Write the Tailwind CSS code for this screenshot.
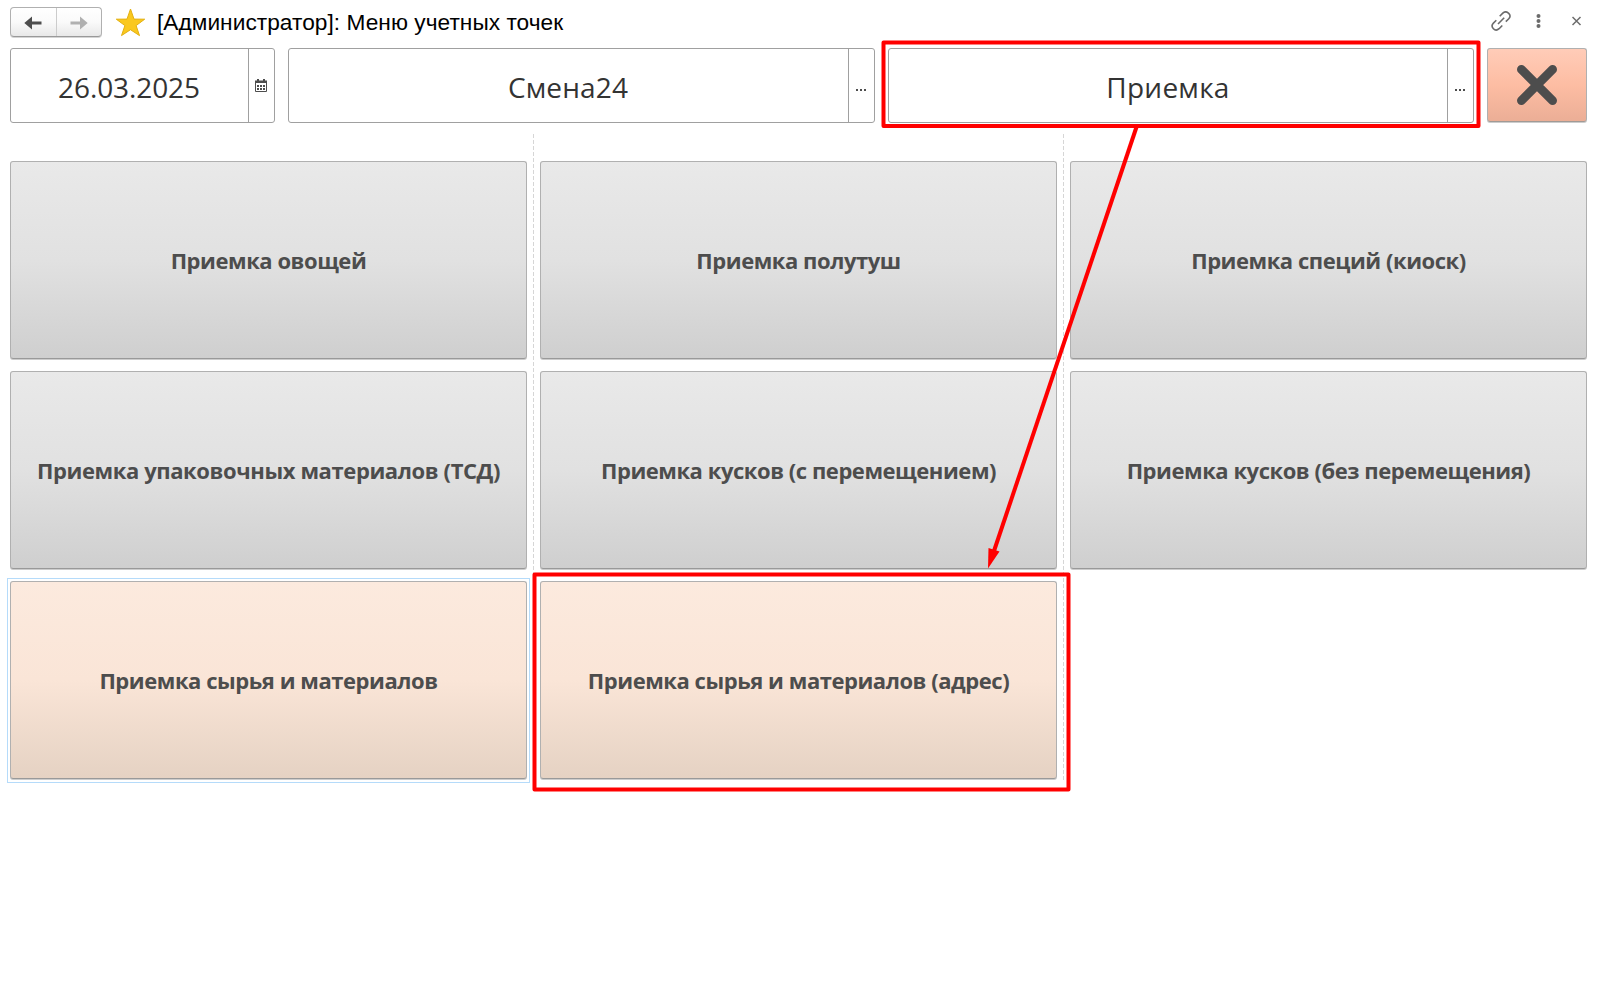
<!DOCTYPE html>
<html lang="ru">
<head>
<meta charset="utf-8">
<title>Меню учетных точек</title>
<script src="https://cdn.jsdelivr.net/npm/@tailwindcss/browser@4"></script>
</head>
<body class="relative h-[988px] w-[1606px] overflow-hidden bg-white font-['Open_Sans','Noto_Sans',sans-serif]">
<header class="flex h-12 items-start pl-[10px] pr-[19px]">
  <div class="mt-[7px] flex h-[30px] w-[92px] rounded-[4px] border border-[#b0b0b0] border-b-[#999] bg-linear-to-b from-white via-[#fafafa] to-[#e8e8e8] shadow-[0_1px_0_#d4d4d4]">
    <div class="flex flex-1 items-center justify-center border-r border-[#ccc]"><svg class="mt-px h-[14px] w-[18px]" viewBox="0 0 18 14"><path d="M0.3 7 8 0.4V5.4H17.5V8.6H8V13.6Z" fill="#4d4d4d"/></svg></div>
    <div class="flex flex-1 items-center justify-center"><svg class="mt-px h-[14px] w-[18px]" viewBox="0 0 18 14"><path d="M17.700 7 10 0.4V5.4H0.5V8.6H10V13.6Z" fill="#b0b0b0"/></svg></div>
  </div>
  <svg class="ml-[13px] mt-2 h-[29px] w-[31px]" viewBox="0 0 31 29"><path d="M15.5 1 19 11.1 29.7 11.2 21.1 17.6 24.5 27.6 15.5 21.7 6.5 27.6 9.9 17.6 1.3 11.2 12 11.1Z" fill="#fac81e" stroke="#e3b010" stroke-width="1"/></svg>
  <h1 class="ml-[11px] mt-[7px] whitespace-nowrap font-['Liberation_Sans',sans-serif] text-[22.67px] leading-[30px] tracking-[0.05px] text-black">[Администратор]: Меню учетных точек</h1>
  <div class="ml-auto flex items-center pt-[11px]">
    <svg class="h-5 w-5" viewBox="0 0 20 20" fill="none" stroke="#6b6b6b" stroke-width="1.6" stroke-linecap="butt"><path d="M8.700 5.200 11.800 2.100C13.600.4 16 .7 17.700 2.300S19.600 6 17.800 7.800L14.800 10.700M5.300 9.200 2.400 12.100C.7 13.800.8 16 2.400 17.700S6.400 19.300 8.100 17.700L11.300 14.500M7 13 13.200 6.800"/></svg>
    <svg class="ml-[25px] h-[14px] w-[5px]" viewBox="0 0 5 14" fill="#6b6b6b"><circle cx="2.5" cy="2" r="2"/><circle cx="2.5" cy="7" r="2"/><circle cx="2.5" cy="12" r="2"/></svg>
    <svg class="ml-[31px] mr-[5px] h-[10px] w-[10px]" viewBox="0 0 10 10" stroke="#6b6b6b" stroke-width="1.5"><path d="M.5 1 8.500 9M8.500 1 .5 9"/></svg>
  </div>
</header>
<section class="flex h-[75px] pl-[10px] text-[28px] text-[#333]">
  <div class="flex w-[265px] rounded-[3px] border border-[#a0a0a0]">
    <div class="flex flex-1 items-center justify-center pr-px pt-[2px] tracking-[-0.1px]">26.03.2025</div>
    <div class="flex w-[26px] items-center justify-center border-l border-[#a0a0a0] pr-px"><svg class="mb-[1px] h-[13px] w-3" viewBox="0 0 12 13"><path d="M.5 2.500H11.500V12.500H.5Z" fill="none" stroke="#4d4d4d"/><path d="M0 1.500H12V4H0ZM2 0H4V3H2ZM8 0H10V3H8Z" fill="#4d4d4d"/><path d="M2 6H4V8H2ZM5 6H7V8H5ZM8 6H10V8H8ZM2 9H4V11H2ZM5 9H7V11H5ZM8 9H10V11H8Z" fill="#4d4d4d"/></svg></div>
  </div>
  <div class="ml-[13px] flex w-[587px] rounded-[3px] border border-[#a0a0a0]">
    <div class="flex flex-1 items-center justify-center pr-px pt-[2px] tracking-[0.15px]">Смена24</div>
    <div class="flex w-[26px] items-center justify-center gap-[2px] border-l border-[#a0a0a0] pr-px pt-[9px]"><i class="size-[2px] bg-[#4d4d4d]"></i><i class="size-[2px] bg-[#4d4d4d]"></i><i class="size-[2px] bg-[#4d4d4d]"></i></div>
  </div>
  <div class="ml-[13px] flex w-[586px] rounded-[3px] border border-[#a0a0a0]">
    <div class="flex flex-1 items-center justify-center pt-[2px] tracking-[0.25px]">Приемка</div>
    <div class="flex w-[26px] items-center justify-center gap-[2px] border-l border-[#a0a0a0] pr-px pt-[9px]"><i class="size-[2px] bg-[#4d4d4d]"></i><i class="size-[2px] bg-[#4d4d4d]"></i><i class="size-[2px] bg-[#4d4d4d]"></i></div>
  </div>
  <button class="ml-[13px] flex h-[74px] w-[100px] items-center justify-center rounded-[3px] border border-[#b0b0b0] border-b-[#a09a96] bg-linear-to-b from-[#ffccb8] via-[#fdbda3] to-[#ebae96] shadow-[0_1px_0_#ccc]"><svg class="h-10 w-10" viewBox="0 0 40 40"><path d="M4.4 4.4 35.6 35.6M35.6 4.4 4.4 35.6" stroke="#4d4d4d" stroke-width="8.8" stroke-linecap="round"/></svg></button>
</section>
<main class="relative mt-[11px] grid h-[645px] grid-cols-[517px_517px_517px] grid-rows-[198px_198px_198px] gap-x-[13px] gap-y-3 pl-[10px] pt-[27px] text-[22px] font-bold tracking-[-0.45px] text-[#4d4d4d]">
  <div class="absolute left-[533px] top-0 h-[646px] w-px bg-[repeating-linear-gradient(to_bottom,#d6d6d6_0_4px,transparent_4px_6px)]"></div>
  <div class="absolute left-[1063px] top-0 h-[646px] w-px bg-[repeating-linear-gradient(to_bottom,#d6d6d6_0_4px,transparent_4px_6px)]"></div>
  <button class="rounded-[3px] border border-[#b0b0b0] border-b-[#999] bg-linear-to-b from-[#e9e9e9] via-[#e1e1e1] to-[#cfcfcf] shadow-[0_1px_0_#ccc]">Приемка овощей</button>
  <button class="rounded-[3px] border border-[#b0b0b0] border-b-[#999] bg-linear-to-b from-[#e9e9e9] via-[#e1e1e1] to-[#cfcfcf] shadow-[0_1px_0_#ccc]">Приемка полутуш</button>
  <button class="rounded-[3px] border border-[#b0b0b0] border-b-[#999] bg-linear-to-b from-[#e9e9e9] via-[#e1e1e1] to-[#cfcfcf] shadow-[0_1px_0_#ccc]">Приемка специй (киоск)</button>
  <button class="rounded-[3px] border border-[#b0b0b0] border-b-[#999] bg-linear-to-b from-[#e9e9e9] via-[#e1e1e1] to-[#cfcfcf] tracking-[-0.39px] shadow-[0_1px_0_#ccc]">Приемка упаковочных материалов (ТСД)</button>
  <button class="rounded-[3px] border border-[#b0b0b0] border-b-[#999] bg-linear-to-b from-[#e9e9e9] via-[#e1e1e1] to-[#cfcfcf] shadow-[0_1px_0_#ccc]">Приемка кусков (с перемещением)</button>
  <button class="rounded-[3px] border border-[#b0b0b0] border-b-[#999] bg-linear-to-b from-[#e9e9e9] via-[#e1e1e1] to-[#cfcfcf] shadow-[0_1px_0_#ccc]">Приемка кусков (без перемещения)</button>
  <button class="relative rounded-[3px] border border-[#b0b0b0] border-b-[#999] bg-linear-to-b from-[#fceade] via-[#fae5d7] to-[#e5d2c3] shadow-[0_1px_0_#ccc]"><i class="absolute -inset-x-1 -bottom-[5px] -top-1 border border-[#b5dbfa]"></i>Приемка сырья и материалов</button>
  <button class="rounded-[3px] border border-[#b0b0b0] border-b-[#999] bg-linear-to-b from-[#fceade] via-[#fae5d7] to-[#e5d2c3] shadow-[0_1px_0_#ccc]">Приемка сырья и материалов (адрес)</button>
</main>
<svg class="pointer-events-none absolute inset-0 h-[988px] w-[1606px]" viewBox="0 0 1606 988" fill="none" stroke="#f00" stroke-width="4" stroke-linejoin="round"><rect x="883.5" y="42.5" width="595" height="83.5"/><rect x="534.5" y="574.5" width="534" height="215"/><path d="M1136.500 127 994 551"/><path d="M988 568.500 988.500 548 999.500 551.500Z" fill="#f00" stroke="none"/></svg>
</body>
</html>
